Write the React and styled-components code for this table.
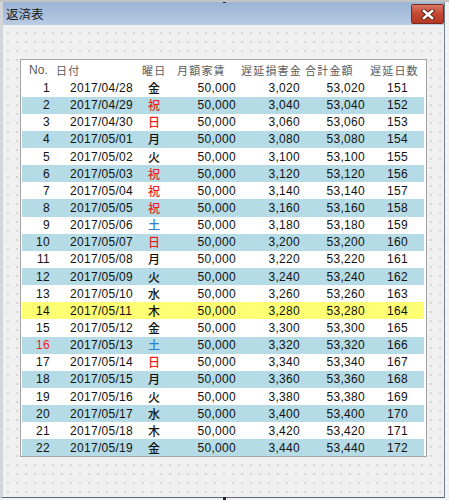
import React from "react";
import styled, { createGlobalStyle } from "styled-components";

const GlobalStyle = createGlobalStyle`
  html, body {
    margin: 0;
    padding: 0;
    background: #f3f3f3;
  }
  body {
    font-family: "Liberation Sans", Arial, "Noto Sans CJK JP", sans-serif;
  }
`;

const days = ["金", "祝", "日", "月", "火", "祝", "祝", "祝", "土", "日", "月", "火", "水", "木", "金", "土", "日", "月", "火", "水", "木", "金"];

const pad = (n) => String(n).padStart(2, "0");
const fmt = (n) => n.toLocaleString("en-US");

const rows = days.map((day, i) => {
  const d = new Date(2017, 3, 28 + i);
  return {
    no: i + 1,
    date: `${d.getFullYear()}/${pad(d.getMonth() + 1)}/${pad(d.getDate())}`,
    day,
    rent: 50000,
    late: 3020 + i * 20,
    total: 53020 + i * 20,
    days: 151 + i,
  };
});

const dayColor = (day) => {
  if (day === "祝" || day === "日") return "#f01c1c";
  if (day === "土") return "#2b7ed3";
  return "#111";
};

const rowColor = (no) => {
  if (no === 14) return "#ffff73";
  if (no % 2 === 0) return "#b5dce6";
  return "#fff";
};

const App = () => {
  return (
    <Page>
      <GlobalStyle />
      <Handle $top />
      <Handle />
      <Window>
        <TitleBar>
          <Title>返済表</Title>
          <CloseButton>
            <svg width="14" height="11" viewBox="0 0 14 11">
              <path d="M3 2 L11 9 M11 2 L3 9" stroke="#6b2417" strokeWidth="4.6" strokeLinecap="square" />
              <path d="M3 2 L11 9 M11 2 L3 9" stroke="#fff" strokeWidth="2.6" strokeLinecap="square" />
            </svg>
          </CloseButton>
        </TitleBar>
        <Client>
          <ListBox>
            <HeaderRow>
              <HeadCell $pad={7} $latin>No.</HeadCell>
              <HeadCell $pad={6}>日付</HeadCell>
              <HeadCell $pad={2}>曜日</HeadCell>
              <HeadCell $pad={9}>月額家賃</HeadCell>
              <HeadCell $pad={5}>遅延損害金</HeadCell>
              <HeadCell $pad={5}>合計金額</HeadCell>
              <HeadCell $pad={5}>遅延日数</HeadCell>
            </HeaderRow>
            {rows.map((r) => (
              <Row key={r.no} $bg={rowColor(r.no)}>
                <Cell $align="right" $color={r.no === 16 ? "#f01c1c" : undefined}>{r.no}</Cell>
                <Cell $pad={20}>{r.date}</Cell>
                <DayCell $color={dayColor(r.day)}>{r.day}</DayCell>
                <Cell $align="right">{fmt(r.rent)}</Cell>
                <Cell $align="right">{fmt(r.late)}</Cell>
                <Cell $align="right">{fmt(r.total)}</Cell>
                <Cell $pad={22}>{r.days}</Cell>
              </Row>
            ))}
          </ListBox>
        </Client>
      </Window>
    </Page>
  );
};

export default App;

const Page = styled.div`
  position: relative;
  width: 449px;
  height: 500px;
  box-sizing: border-box;
  border-top: 2px solid #c3c3c3;
  overflow: hidden;
`;

const Handle = styled.div`
  position: absolute;
  left: 223px;
  ${(p) => (p.$top ? "top: -2px;" : "bottom: 0;")}
  width: 3px;
  height: 3px;
  background: #222;
`;

const Window = styled.div`
  width: 445px;
  height: 496px;
  box-sizing: border-box;
  border-left: 3px solid #d2d5d9;
  border-right: 1px solid #6f8090;
  border-bottom: 1px solid #576879;
  display: flex;
  flex-direction: column;
`;

const TitleBar = styled.div`
  height: 23px;
  flex-shrink: 0;
  display: flex;
  justify-content: space-between;
  align-items: flex-start;
  background: linear-gradient(#9bb5d6, #aac1de 60%, #b9cce5);
`;

const Title = styled.div`
  margin: 4px 0 0 3px;
  font-family: "Noto Sans CJK JP", sans-serif;
  font-size: 12.5px;
  line-height: 15px;
  color: #1c1c1c;
`;

const CloseButton = styled.div`
  width: 33px;
  height: 20px;
  margin-top: 2px;
  box-sizing: border-box;
  border: 1px solid #7d2a1d;
  border-radius: 2px;
  background: linear-gradient(#d87a66, #c54a34 45%, #b53722);
  display: flex;
  align-items: center;
  justify-content: center;
`;

const Client = styled.div`
  flex: 1;
  padding: 34px 0 0 17px;
  background-color: #f0f0f0;
  background-image: radial-gradient(circle at 1px 1px, #c2c2c2 0.55px, transparent 0.9px);
  background-size: 9px 9px;
  background-position: 4px 7px;
`;

const ListBox = styled.div`
  width: 407px;
  height: 398px;
  box-sizing: border-box;
  padding: 1px 2px 0 1px;
  border: 1px solid #a3a3a3;
  background: #fff;
  overflow: hidden;
`;

const HeaderRow = styled.div`
  display: grid;
  grid-template-columns: 28px 90px 28px 68px 64px 65px 59px;
  height: 18.5px;
  align-items: center;
`;

const HeadCell = styled.div`
  padding-left: ${(p) => p.$pad || 0}px;
  font-family: ${(p) => (p.$latin ? '"Liberation Sans", Arial' : '"Noto Sans CJK JP"')}, sans-serif;
  font-size: ${(p) => (p.$latin ? 12 : 11)}px;
  letter-spacing: ${(p) => (p.$latin ? 0 : 1.2)}px;
  color: #5a5a5a;
  white-space: nowrap;
  line-height: 14px;
`;

const Row = styled.div`
  display: grid;
  grid-template-columns: 28px 90px 28px 68px 64px 65px 59px;
  height: 17.15px;
  align-items: center;
  background: ${(p) => p.$bg};
`;

const Cell = styled.div`
  padding-left: ${(p) => p.$pad || 0}px;
  text-align: ${(p) => p.$align || "left"};
  font-size: 12px;
  letter-spacing: 0.3px;
  line-height: 14px;
  color: ${(p) => p.$color || "#111"};
  white-space: nowrap;
`;

const DayCell = styled.div`
  text-align: center;
  font-family: "Noto Sans CJK JP", sans-serif;
  font-size: 12px;
  line-height: 14px;
  font-weight: 500;
  color: ${(p) => p.$color};
`;
